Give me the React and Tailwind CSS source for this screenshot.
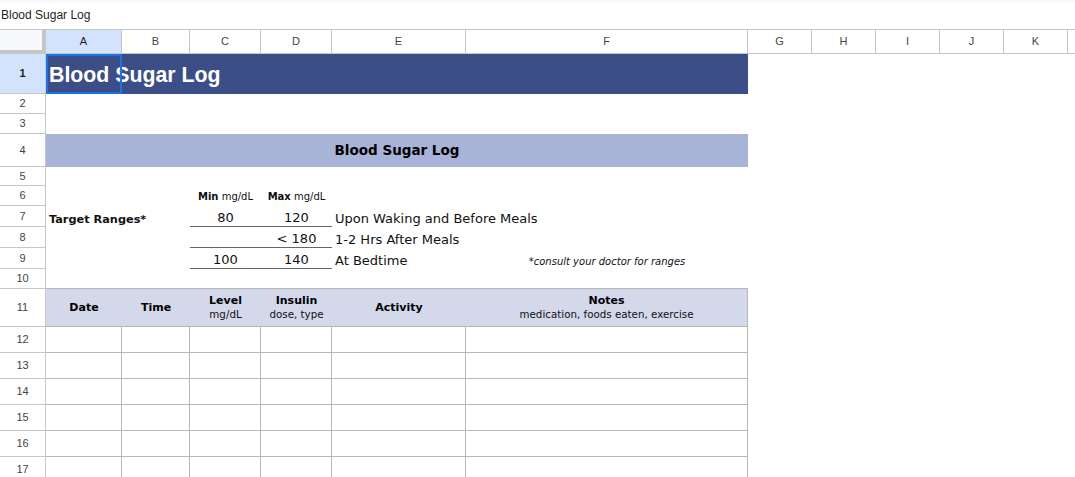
import React from "react";

const GRID =
  "grid grid-cols-[46px_76px_68px_71px_71px_134px_282px_64px_64px_64px_64px_64px_1fr] grid-rows-[24px_40px_20px_20px_33px_19px_20px_21px_21px_21px_20px_38px_26px_26px_26px_26px_26px_26px]";

const HL = "border-[#c4c7c5]";
const TB = "border-[#b7b7b7]";
const CELLFONT = "font-['DejaVu_Sans',sans-serif] text-[#111]";

function RowNum({ n, selected }) {
  return (
    <div
      className={`border-r border-b ${HL} flex items-center justify-center text-[11px] ${
        selected ? "bg-[#d3e3fd] text-[#1f1f1f] font-bold" : "bg-white text-[#444]"
      }`}
    >
      {n}
    </div>
  );
}

function Rest() {
  return <div className="col-span-6" />;
}

export default function App() {
  const letters = ["A", "B", "C", "D", "E", "F", "G", "H", "I", "J", "K"];
  return (
    <div className="w-[1075px] h-[477px] overflow-hidden bg-white font-['Liberation_Sans',Arial,sans-serif]">
      <div className={`h-[30px] border-b ${HL}`}>
        <div className="h-[3px] bg-[#f8f9fa]" />
        <div className="pl-[1px] text-[12px] leading-[24px] text-[#1f1f1f]">Blood Sugar Log</div>
      </div>
      <div className={GRID}>
        {/* header row */}
        <div className={`bg-[#f8f9fa] border-r-4 border-b-4 ${HL}`} />
        {letters.map((l) => (
          <div
            key={l}
            className={`border-r border-b ${HL} flex items-center justify-center text-[11px] ${
              l === "A" ? "bg-[#d3e3fd] text-[#1f1f1f]" : "bg-white text-[#444]"
            }`}
          >
            {l}
          </div>
        ))}
        <div className={`border-b ${HL}`} />

        {/* row 1 */}
        <RowNum n={1} selected />
        <div className="col-span-6 relative bg-[#3c4e88] flex items-center pt-[3px]">
          <span className="pl-[3px] text-white font-bold text-[21.3px] whitespace-nowrap">Blood Sugar Log</span>
          <div className="absolute left-0 top-0 w-[76px] h-full border-2 border-[#1a73e8]" />
        </div>
        <Rest />

        {/* row 2, 3 */}
        <RowNum n={2} />
        <div className="col-span-12" />
        <RowNum n={3} />
        <div className="col-span-12" />

        {/* row 4 */}
        <RowNum n={4} />
        <div className={`col-span-6 bg-[#a8b3d8] flex items-center justify-center ${CELLFONT}`}>
          <span className="font-bold text-[13.5px] text-black">Blood Sugar Log</span>
        </div>
        <Rest />

        {/* row 5 */}
        <RowNum n={5} />
        <div className="col-span-12" />

        {/* row 6 */}
        <RowNum n={6} />
        <div className="col-span-2" />
        <div className={`flex items-end justify-center pb-[3px] text-[10px] leading-[12px] ${CELLFONT}`}>
          <span>
            <b>Min</b> mg/dL
          </span>
        </div>
        <div className={`flex items-end justify-center pb-[3px] text-[10px] leading-[12px] ${CELLFONT}`}>
          <span>
            <b>Max</b> mg/dL
          </span>
        </div>
        <div className="col-span-8" />

        {/* row 7 */}
        <RowNum n={7} />
        <div className={`col-span-2 flex items-end pl-[3px] text-[11.3px] leading-[15px] font-bold whitespace-nowrap ${CELLFONT}`}>
          Target Ranges*
        </div>
        <div className={`border-b border-[#666] flex items-end justify-center text-[13px] leading-[16px] ${CELLFONT}`}>80</div>
        <div className={`border-b border-[#666] flex items-end justify-center text-[13px] leading-[16px] ${CELLFONT}`}>120</div>
        <div className={`col-span-2 flex items-end pl-[3px] text-[13px] leading-[16px] whitespace-nowrap ${CELLFONT}`}>
          Upon Waking and Before Meals
        </div>
        <Rest />

        {/* row 8 */}
        <RowNum n={8} />
        <div className="col-span-2" />
        <div className="border-b border-[#666]" />
        <div className={`border-b border-[#666] flex items-end justify-center text-[13px] leading-[16px] ${CELLFONT}`}>&lt; 180</div>
        <div className={`col-span-2 flex items-end pl-[3px] text-[13px] leading-[16px] whitespace-nowrap ${CELLFONT}`}>
          1-2 Hrs After Meals
        </div>
        <Rest />

        {/* row 9 */}
        <RowNum n={9} />
        <div className="col-span-2" />
        <div className={`border-b border-[#666] flex items-end justify-center text-[13px] leading-[16px] ${CELLFONT}`}>100</div>
        <div className={`border-b border-[#666] flex items-end justify-center text-[13px] leading-[16px] ${CELLFONT}`}>140</div>
        <div className={`flex items-end pl-[3px] text-[13px] leading-[16px] whitespace-nowrap ${CELLFONT}`}>At Bedtime</div>
        <div className={`flex items-end justify-center pb-[1px] text-[10px] leading-[12px] italic whitespace-nowrap ${CELLFONT}`}>
          *consult your doctor for ranges
        </div>
        <Rest />

        {/* row 10 */}
        <RowNum n={10} />
        <div className={`col-span-6 border-b ${TB}`} />
        <Rest />

        {/* row 11 */}
        <RowNum n={11} />
        {[
          ["Date"],
          ["Time"],
          ["Level", "mg/dL"],
          ["Insulin", "dose, type"],
          ["Activity"],
          ["Notes", "medication, foods eaten, exercise"],
        ].map((h, i) => (
          <div
            key={i}
            className={`bg-[#d3d8eb] border-b ${TB} ${i === 5 ? "border-r" : ""} flex flex-col items-center justify-center ${CELLFONT}`}
          >
            <span className="font-bold text-[11px] leading-[14px] text-black">{h[0]}</span>
            {h[1] && <span className="text-[10.3px] leading-[13px] whitespace-nowrap">{h[1]}</span>}
          </div>
        ))}
        <Rest />

        {/* rows 12-17 */}
        {[12, 13, 14, 15, 16, 17].map((n) => (
          <React.Fragment key={n}>
            <RowNum n={n} />
            {[0, 1, 2, 3, 4, 5].map((c) => (
              <div key={c} className={`border-r border-b ${TB}`} />
            ))}
            <Rest />
          </React.Fragment>
        ))}
      </div>
    </div>
  );
}
